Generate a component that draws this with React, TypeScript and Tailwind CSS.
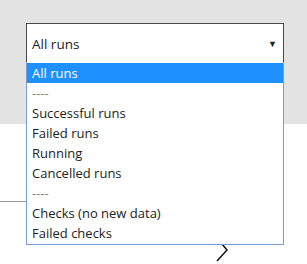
import React from 'react';

const options = [
  { label: 'All runs', selected: true },
  { label: '----', separator: true },
  { label: 'Successful runs' },
  { label: 'Failed runs' },
  { label: 'Running' },
  { label: 'Cancelled runs' },
  { label: '----', separator: true },
  { label: 'Checks (no new data)' },
  { label: 'Failed checks' },
];

const App = () => {
  return (
    <div className="relative w-[307px] h-[264px] bg-white overflow-hidden font-['Open_Sans',sans-serif] text-[13px] text-[#222]">
      <div className="h-[124px] bg-[#e3e3e3] pt-[23px] pl-[26px] pr-[23px]">
        <div className="h-[40px] bg-white border border-[#4a4a4a] flex items-center justify-between pl-[5px] pr-[6px]">
          <span className="leading-[20px] mt-[2px] text-[13.5px]">All runs</span>
          <span className="text-[9px] leading-none text-[#222]">▼</span>
        </div>
      </div>

      <div className="relative h-[140px] pt-[77px]">
        <div className="w-[27px] h-px bg-[#9a9a9a]" />
        <svg className="absolute left-[214px] top-[116px]" width="16" height="24" viewBox="0 0 16 24">
          <polyline points="8,4 13,10 3,21" fill="none" stroke="#111" strokeWidth="1.5" />
        </svg>
      </div>

      <div className="absolute left-[26px] top-[62px] w-[258px] bg-white border border-t-0 border-[#7b9bd6] pt-px pb-px">
        {options.map((o, i) => (
          <div
            key={i}
            className={
              'h-[20px] leading-[20px] pl-[5px] whitespace-nowrap ' +
              (o.selected ? 'bg-[#1e90ff] text-white' : o.separator ? 'text-[#888]' : '')
            }
          >
            {o.label}
          </div>
        ))}
      </div>
    </div>
  );
};

export default App;
